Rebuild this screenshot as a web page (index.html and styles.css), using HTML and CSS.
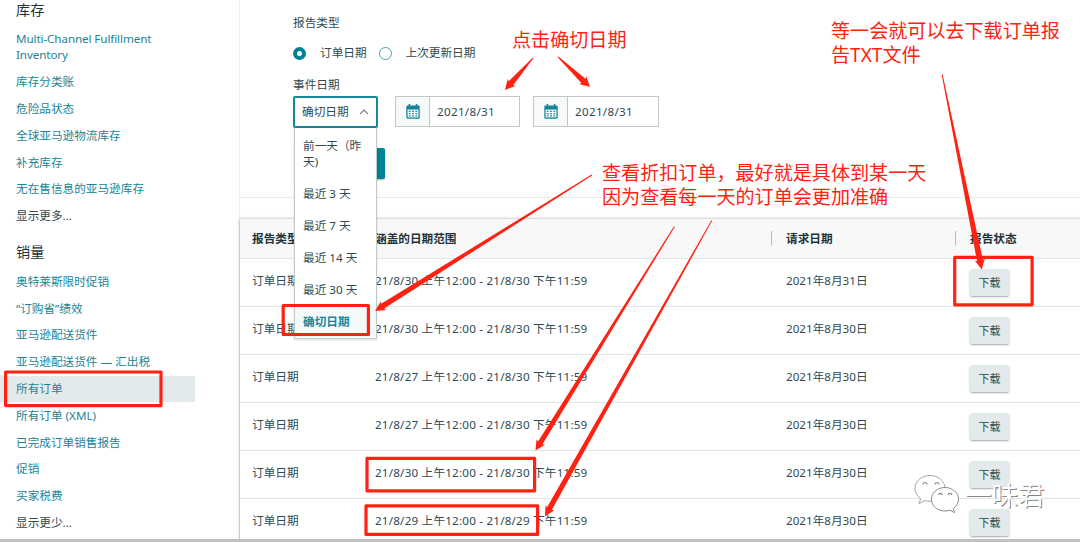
FILE: index.html
```
<!DOCTYPE html>
<html lang="zh-CN">
  <head>
    <meta charset="UTF-8">
    <title>所有订单</title>
    <link rel="stylesheet" href="styles.css">
  </head>
  <body>
    <div class="page">
      <nav class="sidebar">
        <h2>库存</h2>
        <ul>
          <li class="latin"><a>Multi-Channel Fulfillment Inventory</a></li>
          <li><a>库存分类账</a></li>
          <li><a>危险品状态</a></li>
          <li><a>全球亚马逊物流库存</a></li>
          <li><a>补充库存</a></li>
          <li><a>无在售信息的亚马逊库存</a></li>
          <li class="more">显示更多...</li>
        </ul>
        <h2>销量</h2>
        <ul>
          <li><a>奥特莱斯限时促销</a></li>
          <li><a>“订购省”绩效</a></li>
          <li><a>亚马逊配送货件</a></li>
          <li><a>亚马逊配送货件 — 汇出税</a></li>
          <li class="active"><a>所有订单</a></li>
          <li><a>所有订单 (XML)</a></li>
          <li><a>已完成订单销售报告</a></li>
          <li><a>促销</a></li>
          <li><a>买家税费</a></li>
          <li class="more">显示更少...</li>
        </ul>
      </nav>
      <main>
        <form class="filters">
          <div class="label">报告类型</div>
          <div class="radios">
            <span class="radio checked"></span><span class="radio-text">订单日期</span>
            <span class="radio"></span><span class="radio-text">上次更新日期</span>
          </div>
          <div class="label">事件日期</div>
          <div class="dates">
            <div class="select">
              <span>确切日期</span>
              <svg width="10" height="6" viewBox="0 0 10 6"><path d="M1 5.2L5 1.2L9 5.2" fill="none" stroke="#6f7f82" stroke-width="1.2"/></svg>
              <ul class="menu">
                <li>前一天（昨天)</li>
                <li>最近 3 天</li>
                <li>最近 7 天</li>
                <li>最近 14 天</li>
                <li>最近 30 天</li>
                <li class="selected">确切日期</li>
              </ul>
            </div>
            <div class="date">
              <span class="addon"><svg width="14" height="15" viewBox="0 0 14 15"><path d="M1.5 1.5h11a1.2 1.2 0 0 1 1.2 1.2v10.8a1.2 1.2 0 0 1-1.2 1.2h-11a1.2 1.2 0 0 1-1.2-1.2V2.7a1.2 1.2 0 0 1 1.2-1.2z" fill="#17869a"/><path d="M1.6 5.6h10.8v7.8H1.6z" fill="#fff"/><path d="M3.4 0v3M10.6 0v3" stroke="#17869a" stroke-width="1.6"/><path d="M2.8 7.3h8.6M2.8 9.6h8.6M2.8 11.9h8.6" stroke="#17869a" stroke-width="1.3" stroke-dasharray="1.8 1.5"/></svg></span>
              <span class="value">2021/8/31</span>
            </div>
            <div class="date">
              <span class="addon"><svg width="14" height="15" viewBox="0 0 14 15"><path d="M1.5 1.5h11a1.2 1.2 0 0 1 1.2 1.2v10.8a1.2 1.2 0 0 1-1.2 1.2h-11a1.2 1.2 0 0 1-1.2-1.2V2.7a1.2 1.2 0 0 1 1.2-1.2z" fill="#17869a"/><path d="M1.6 5.6h10.8v7.8H1.6z" fill="#fff"/><path d="M3.4 0v3M10.6 0v3" stroke="#17869a" stroke-width="1.6"/><path d="M2.8 7.3h8.6M2.8 9.6h8.6M2.8 11.9h8.6" stroke="#17869a" stroke-width="1.3" stroke-dasharray="1.8 1.5"/></svg></span>
              <span class="value">2021/8/31</span>
            </div>
          </div>
          <div class="submit"></div>
        </form>
        <div class="table">
          <div class="row head">
            <span>报告类型</span><span>涵盖的日期范围</span><span class="split">请求日期</span><span class="split">报告状态</span>
          </div>
          <div class="row">
            <span>订单日期</span><span class="range">21/8/30 上午12:00 - 21/8/30 下午11:59</span><span>2021年8月31日</span><span class="btn">下载</span>
          </div>
          <div class="row">
            <span>订单日期</span><span class="range">21/8/30 上午12:00 - 21/8/30 下午11:59</span><span>2021年8月30日</span><span class="btn">下载</span>
          </div>
          <div class="row">
            <span>订单日期</span><span class="range">21/8/27 上午12:00 - 21/8/30 下午11:59</span><span>2021年8月30日</span><span class="btn">下载</span>
          </div>
          <div class="row">
            <span>订单日期</span><span class="range">21/8/27 上午12:00 - 21/8/30 下午11:59</span><span>2021年8月30日</span><span class="btn">下载</span>
          </div>
          <div class="row">
            <span>订单日期</span><span class="range">21/8/30 上午12:00 - 21/8/30 下午11:59</span><span>2021年8月30日</span><span class="btn">下载</span>
          </div>
          <div class="row">
            <span>订单日期</span><span class="range">21/8/29 上午12:00 - 21/8/29 下午11:59</span><span>2021年8月30日</span><span class="btn">下载</span>
          </div>
        </div>
      </main>
      <div class="bottom-bar"></div>

      <!-- notes drawn over the page -->
      <svg class="marks" width="1080" height="542" viewBox="0 0 1080 542">
        <g fill="none" stroke="#ff2213" stroke-width="3.2" stroke-linejoin="round">
          <rect x="5.6" y="372" width="155.4" height="33.6"/>
          <rect x="283.2" y="305.5" width="85.2" height="29"/>
          <rect x="954.7" y="257.4" width="77.4" height="47.4"/>
          <rect x="367" y="458.4" width="167.6" height="32.4"/>
          <rect x="366" y="505.8" width="171.6" height="28.6"/>
        </g>
        <g fill="#ff2213">
          <path transform="translate(505 90) rotate(131.2)" d="M0 0L-10 -5.2L-9 -3L-42.5 -.5V.5L-9 3L-10 5.2z"/>
          <path transform="translate(590 87) rotate(43.2)" d="M0 0L-10 -5.2L-9 -3L-43.9 -.5V.5L-9 3L-10 5.2z"/>
          <path transform="translate(981.8 269.5) rotate(78.5)" d="M0 0L-10 -5L-9 -3L-199 -.5V.5L-9 3L-10 5z"/>
          <path transform="translate(375 311) rotate(147.9)" d="M0 0L-10 -5L-9 -2.8L-256 -.5V.5L-9 2.8L-10 5z"/>
          <path transform="translate(535.5 450.5) rotate(121.8)" d="M0 0L-10 -5L-9 -2.6L-263.6 -.5V.5L-9 2.6L-10 5z"/>
          <path transform="translate(545 516.5) rotate(119.4)" d="M0 0L-10 -5L-9 -2.7L-339.9 -.5V.5L-9 2.7L-10 5z"/>
        </g>
      </svg>
      <div class="note note-date">点击确切日期</div>
      <div class="note note-order">查看折扣订单，最好就是具体到某一天<br>因为查看每一天的订单会更加准确</div>
      <div class="note note-download">等一会就可以去下载订单报<br>告TXT文件</div>
      <div class="watermark">
        <svg width="46" height="40" viewBox="0 0 46 40">
          <g fill="#fff" stroke="#8b8b8b" stroke-width="1">
            <path d="M16 1.5C7.5 1.5 1 7.3 1 14.5c0 4.200 2.200 7.700 5.700 10L5 29.500l5.800-2.900c1.700.5 3.400.7 5.200.7 8.400 0 15-5.600 15-12.800S24.400 1.500 16 1.500z" stroke="#a5a5a5"/>
            <path d="M31 13.500c-7.600 0-13.600 5.200-13.600 11.800S23.400 37 31 37c1.800 0 3.400-.3 5-.8l4.600 2.500-1.300-4.200c3.200-2.200 5.200-5.400 5.200-9.200 0-6.600-6-11.800-13.500-11.800z"/>
          </g>
          <g fill="none" stroke="#888" stroke-width="1.2">
            <path d="M9 10.500a2 2 0 0 1 4 0M21 10.500a2 2 0 0 1 4 0M24.800 21a1.700 1.700 0 0 1 3.400 0M34.300 21a1.700 1.700 0 0 1 3.400 0"/>
          </g>
        </svg>
        <span>一味君</span>
      </div>
    </div>
  </body>
</html>
```
FILE: styles.css
```
* {
  box-sizing: border-box;
}
body {
  margin: 0;
  font-family: "Noto Sans", "Noto Sans CJK SC", sans-serif;
  font-size: 11.65px;
  line-height: 16px;
  color: #2f4a50;
  background-color: #fff;
}
ul {
  list-style: none;
  margin: 0;
  padding: 0;
}
.page {
  position: relative;
  display: flex;
  width: 1080px;
  height: 542px;
  overflow: hidden;
}
.sidebar {
  width: 239px;
  flex: none;
}
.sidebar h2 {
  margin: 0;
  padding-left: 16px;
  height: 26px;
  line-height: 20px;
  font-size: 14.2px;
  font-weight: normal;
  color: #1d3338;
}
.sidebar ul + h2 {
  height: 39px;
  padding-top: 13px;
}
.sidebar li {
  width: 195px;
  padding: 5.4px 20px 5.4px 16px;
  color: #1b8496;
}
.sidebar .latin {
  letter-spacing: -.1px;
}
.sidebar .more {
  color: #2f4a50;
}
.sidebar .active {
  background-color: #e2eaeb;
}
main {
  flex: 1;
  border-left: 1px solid #eceeee;
}
.filters {
  height: 198px;
  padding: 15px 0 0 53px;
  border-bottom: 1px solid #e8eaea;
}
.radios {
  display: flex;
  align-items: center;
  height: 30px;
  margin: 0 0 16px;
  padding-top: 14px;
}
.radio {
  width: 13px;
  height: 13px;
  margin-right: 14px;
  border: 1px solid #4aa0ae;
  border-radius: 50%;
}
.radio.checked {
  border: 4px solid #008296;
}
.radio-text {
  margin-right: 12px;
}
.dates {
  display: flex;
  height: 32px;
  margin-top: 3px;
}
.select {
  position: relative;
  display: flex;
  align-items: center;
  justify-content: space-between;
  width: 85px;
  padding: 0 7px;
  border: 2px solid #17869a;
  border-radius: 2px;
  background-color: #fff;
}
.menu {
  position: absolute;
  z-index: 1;
  top: 30px;
  left: -1px;
  width: 83px;
  padding-top: 2px;
  border: 1px solid #c3cccd;
  border-top: 0;
  background-color: #fff;
  box-shadow: 0 1px 2px rgba(0, 0, 0, .15);
}
.menu li {
  padding: 8px;
}
.menu .selected {
  font-weight: bold;
  color: #17869a;
  background-color: #f3f8f9;
}
.date {
  display: flex;
  width: 125px;
  height: 31px;
  margin: 0 0 0 17px;
  border: 1px solid #bfc8c9;
}
.date + .date {
  margin-left: 13px;
  width: 126px;
}
.addon {
  display: flex;
  align-items: center;
  justify-content: center;
  width: 34px;
  border-right: 1px solid #bfc8c9;
  background-color: #f8f9f9;
}
.value {
  padding: 7px;
  letter-spacing: .3px;
}
.submit {
  width: 90px;
  height: 31px;
  margin: 20px 0 0 2px;
  border-radius: 2px;
  background-color: #008296;
  box-shadow: 0 1px 2px rgba(0, 0, 0, .3);
}
.table {
  margin-top: 21px;
  box-shadow: 0 0 3px rgba(0, 0, 0, .35);
}
.row {
  display: grid;
  grid-template-columns: 123px 411px 184px 1fr;
  align-items: center;
  height: 48px;
  padding: 0 0 3px 12px;
  border-bottom: 1px solid #dfe4e5;
}
.row.head {
  height: 40px;
  padding-bottom: 0;
  padding-top: 1px;
  font-weight: bold;
  color: #1d3338;
  background-color: #f8f8f8;
}
.split {
  position: relative;
}
.split:before {
  content: "";
  position: absolute;
  left: -15px;
  top: 0;
  height: 15px;
  border-left: 1px solid #b5bebf;
}
.range {
  letter-spacing: .2px;
}
.btn {
  width: 39px;
  height: 27px;
  margin-top: 3px;
  line-height: 27px;
  font-size: 11px;
  text-align: center;
  border-radius: 2px;
  background-color: #e2eaeb;
  box-shadow: 0 1px 2px rgba(0, 0, 0, .35);
}
.bottom-bar {
  position: absolute;
  left: 0;
  bottom: 0;
  width: 100%;
  height: 3px;
  background-color: #c1c1c1;
}
.marks {
  position: absolute;
  z-index: 2;
  top: 0;
  left: 0;
}
.note {
  position: absolute;
  z-index: 3;
  font-size: 19.08px;
  line-height: 24px;
  white-space: nowrap;
  color: #ff2213;
}
.note-date {
  left: 512px;
  top: 28px;
}
.note-order {
  left: 602px;
  top: 161px;
}
.note-download {
  left: 831px;
  top: 19px;
}
.watermark {
  position: absolute;
  z-index: 3;
  left: 914px;
  top: 472px;
  display: flex;
  align-items: center;
  gap: 5px;
  font-size: 26.5px;
  line-height: 40px;
  color: #fff;
  text-shadow: 1px 1px 0 #888;
}
.watermark span {
  padding-top: 3px;
}
```
